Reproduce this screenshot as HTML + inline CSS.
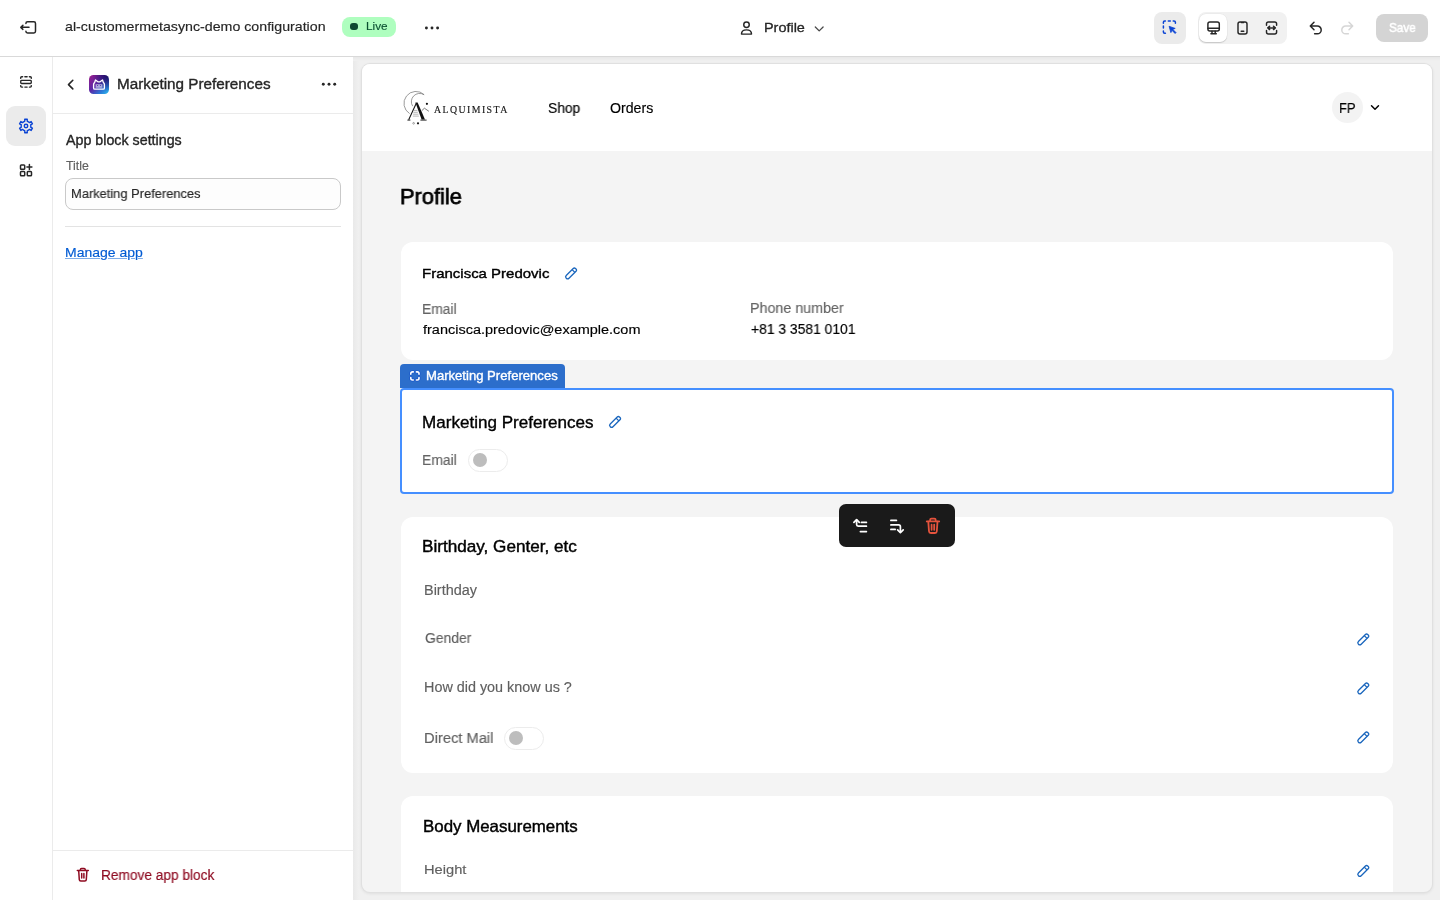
<!DOCTYPE html>
<html><head><meta charset="utf-8">
<style>
*{box-sizing:border-box;margin:0;padding:0}
html,body{width:1440px;height:900px;overflow:hidden;background:#fff;font-family:"Liberation Sans",sans-serif}
.a{position:absolute}
.t{position:absolute;white-space:pre;line-height:normal;will-change:transform}
svg{position:absolute;overflow:visible}
</style></head><body>
<!-- top bar -->
<div class="a" style="left:0;top:0;width:1440px;height:56px;background:#fff"></div>
<div class="a" style="left:0;top:56px;width:1440px;height:1px;background:#d9d9d9"></div>
<!-- left rail -->
<div class="a" style="left:52px;top:57px;width:1px;height:843px;background:#ebebeb"></div>
<div class="a" style="left:6px;top:106px;width:40px;height:40px;border-radius:9px;background:#ebebeb"></div>
<!-- panel -->
<div class="a" style="left:53px;top:113px;width:300px;height:1px;background:#ebebeb"></div>
<div class="a" style="left:89px;top:74.75px;width:20px;height:19.5px;border-radius:4.5px;background:radial-gradient(circle at 100% 0%,rgba(10,5,80,0.85) 0%,rgba(10,5,80,0) 60%),linear-gradient(135deg,#9a1a8a 0%,#5a2aa8 45%,#2a7ad8 75%,#2ec0ee 100%)"></div>
<div class="a" style="left:65px;top:178px;width:276px;height:32px;border-radius:8px;border:1px solid #c9c9c9;background:#fdfdfd"></div>
<div class="a" style="left:65px;top:226px;width:276px;height:1px;background:#e3e3e3"></div>
<div class="a" style="left:53px;top:850px;width:300px;height:1px;background:#ebebeb"></div>
<!-- preview bg -->
<div class="a" style="left:353px;top:57px;width:1087px;height:843px;background:#f0f0f0"></div>
<div class="a" style="left:353px;top:57px;width:6px;height:843px;background:linear-gradient(to right,#e9e9e9,#f0f0f0)"></div>
<div class="a" style="left:353px;top:57px;width:1087px;height:4px;background:linear-gradient(#e8e8e8,#f0f0f0)"></div>
<!-- frame -->
<div class="a" style="left:361px;top:63px;width:1072px;height:830px;border-radius:9px;background:#e0e0e0;box-shadow:0 1px 3px rgba(0,0,0,0.07)"></div>
<div class="a" style="left:362px;top:64px;width:1070px;height:828px;border-radius:8px;background:#f4f4f4;overflow:hidden">
  <div class="a" style="left:0;top:0;width:1070px;height:87px;background:#fff"></div>
</div>
<!-- cards -->
<div class="a" style="left:401px;top:242px;width:992px;height:118px;border-radius:12px;background:#fff"></div>
<div class="a" style="left:400px;top:388px;width:994px;height:106px;border-radius:4px;border:2px solid #458fff;background:#fff"></div>
<div class="a" style="left:400px;top:364px;width:165px;height:24px;border-radius:4px 4px 0 0;background:#2c6ecb"></div>
<div class="a" style="left:401px;top:516.5px;width:992px;height:256px;border-radius:12px;background:#fff"></div>
<div class="a" style="left:401px;top:796px;width:992px;height:96px;border-radius:12px 12px 0 0;background:#fff"></div>
<!-- toggles -->
<div class="a" style="left:467.5px;top:448.5px;width:40px;height:23px;border-radius:12px;border:1px solid #ececec;background:#fff"></div>
<div class="a" style="left:472.6px;top:453px;width:14px;height:14px;border-radius:7px;background:#bdbdbd"></div>
<div class="a" style="left:503.8px;top:726.5px;width:40px;height:23px;border-radius:12px;border:1px solid #ececec;background:#fff"></div>
<div class="a" style="left:508.7px;top:731px;width:14px;height:14px;border-radius:7px;background:#bdbdbd"></div>
<!-- FP avatar -->
<div class="a" style="left:1331.75px;top:91.6px;width:31.2px;height:31.2px;border-radius:16px;background:#f3f3f3"></div>
<!-- Live badge -->
<div class="a" style="left:342px;top:16.5px;width:54px;height:20px;border-radius:8px;background:#affebf"></div>
<div class="a" style="left:350px;top:22.6px;width:7.8px;height:7.6px;border-radius:3px;background:#0c4a30"></div>
<!-- toolbar right -->
<div class="a" style="left:1154px;top:12px;width:32px;height:32px;border-radius:8px;background:#ebebeb"></div>
<div class="a" style="left:1198px;top:12px;width:89px;height:32px;border-radius:8px;background:#f1f1f1"></div>
<div class="a" style="left:1199px;top:14px;width:28px;height:28px;border-radius:7px;background:#fff;box-shadow:0 1px 1px rgba(0,0,0,0.15),0 0 0 0.5px rgba(0,0,0,0.05)"></div>
<div class="a" style="left:1375.5px;top:14px;width:52.5px;height:28px;border-radius:8px;background:#d4d4d4"></div>
<!-- floating toolbar -->
<div class="a" style="left:839px;top:504.2px;width:115.5px;height:43px;border-radius:7px;background:#1a1a1a"></div>

<div class="t" style="left:65.27px;top:20.06px;font-size:12.64px;font-weight:400;color:#262626;font-family:'Liberation Sans';-webkit-text-stroke:0.15px #262626;transform:scaleX(1.1253);transform-origin:0 0;">al-customermetasync-demo configuration</div>
<div class="t" style="left:365.57px;top:19.44px;font-size:11.78px;font-weight:400;color:#0c5132;font-family:'Liberation Sans';-webkit-text-stroke:0.15px #0c5132;">Live</div>
<div class="t" style="left:764.46px;top:20.30px;font-size:13.26px;font-weight:400;color:#262626;font-family:'Liberation Sans';-webkit-text-stroke:0.3px #262626;transform:scaleX(1.0888);transform-origin:0 0;">Profile</div>
<div class="t" style="left:1388.85px;top:20.85px;font-size:12.54px;font-weight:400;color:#ffffff;font-family:'Liberation Sans';-webkit-text-stroke:0.5px #ffffff;transform:scaleX(0.9382);transform-origin:0 0;">Save</div>
<div class="t" style="left:117.44px;top:76.19px;font-size:14.82px;font-weight:400;color:#262626;font-family:'Liberation Sans';-webkit-text-stroke:0.35px #262626;transform:scaleX(1.0305);transform-origin:0 0;">Marketing Preferences</div>
<div class="t" style="left:66.17px;top:132.18px;font-size:13.95px;font-weight:400;color:#262626;font-family:'Liberation Sans';-webkit-text-stroke:0.35px #262626;transform:scaleX(1.0230);transform-origin:0 0;">App block settings</div>
<div class="t" style="left:66.27px;top:159.01px;font-size:11.92px;font-weight:400;color:#616161;font-family:'Liberation Sans';-webkit-text-stroke:0.15px #616161;transform:scaleX(1.0366);transform-origin:0 0;">Title</div>
<div class="t" style="left:70.94px;top:186.46px;font-size:13.08px;font-weight:400;color:#262626;font-family:'Liberation Sans';-webkit-text-stroke:0.15px #262626;transform:scaleX(0.9845);transform-origin:0 0;">Marketing Preferences</div>
<div class="t" style="left:64.83px;top:245.20px;font-size:13.37px;font-weight:400;color:#005bd3;font-family:'Liberation Sans';text-decoration:underline;text-underline-offset:1px;text-decoration-thickness:1px;text-decoration-color:rgba(0,91,211,0.5);-webkit-text-stroke:0.15px #005bd3;transform:scaleX(1.0481);transform-origin:0 0;">Manage app</div>
<div class="t" style="left:101.19px;top:866.98px;font-size:13.95px;font-weight:400;color:#8e0b21;font-family:'Liberation Sans';-webkit-text-stroke:0.15px #8e0b21;transform:scaleX(0.9815);transform-origin:0 0;">Remove app block</div>
<div class="t" style="left:548.38px;top:99.64px;font-size:14.09px;font-weight:400;color:#000000;font-family:'Liberation Sans';-webkit-text-stroke:0.15px #000000;transform:scaleX(0.9788);transform-origin:0 0;">Shop</div>
<div class="t" style="left:609.68px;top:99.64px;font-size:14.09px;font-weight:400;color:#000000;font-family:'Liberation Sans';-webkit-text-stroke:0.15px #000000;transform:scaleX(1.0061);transform-origin:0 0;">Orders</div>
<div class="t" style="left:1339.35px;top:99.58px;font-size:13.95px;font-weight:400;color:#000000;font-family:'Liberation Sans';-webkit-text-stroke:0.15px #000000;transform:scaleX(0.9295);transform-origin:0 0;">FP</div>
<div class="t" style="left:400.49px;top:184.33px;font-size:22.28px;font-weight:400;color:#000000;font-family:'Liberation Sans';-webkit-text-stroke:0.75px #000000;transform:scaleX(0.9801);transform-origin:0 0;">Profile</div>
<div class="t" style="left:422.09px;top:266.10px;font-size:13.48px;font-weight:400;color:#000000;font-family:'Liberation Sans';-webkit-text-stroke:0.4px #000000;transform:scaleX(1.1126);transform-origin:0 0;">Francisca Predovic</div>
<div class="t" style="left:422.10px;top:300.61px;font-size:14.24px;font-weight:400;color:#646464;font-family:'Liberation Sans';-webkit-text-stroke:0.15px #646464;transform:scaleX(0.9725);transform-origin:0 0;">Email</div>
<div class="t" style="left:423.07px;top:322.49px;font-size:13.05px;font-weight:400;color:#000000;font-family:'Liberation Sans';-webkit-text-stroke:0.15px #000000;transform:scaleX(1.1096);transform-origin:0 0;">francisca.predovic@example.com</div>
<div class="t" style="left:749.60px;top:300.22px;font-size:14.67px;font-weight:400;color:#646464;font-family:'Liberation Sans';-webkit-text-stroke:0.15px #646464;transform:scaleX(0.9746);transform-origin:0 0;">Phone number</div>
<div class="t" style="left:750.68px;top:321.47px;font-size:14.18px;font-weight:400;color:#000000;font-family:'Liberation Sans';-webkit-text-stroke:0.15px #000000;transform:scaleX(0.9780);transform-origin:0 0;">+81 3 3581 0101</div>
<div class="t" style="left:426.34px;top:369.16px;font-size:12.64px;font-weight:400;color:#ffffff;font-family:'Liberation Sans';-webkit-text-stroke:0.35px #ffffff;transform:scaleX(1.0370);transform-origin:0 0;">Marketing Preferences</div>
<div class="t" style="left:422.45px;top:413.18px;font-size:16.70px;font-weight:400;color:#000000;font-family:'Liberation Sans';-webkit-text-stroke:0.35px #000000;transform:scaleX(1.0223);transform-origin:0 0;">Marketing Preferences</div>
<div class="t" style="left:422.44px;top:451.59px;font-size:14.82px;font-weight:400;color:#646464;font-family:'Liberation Sans';-webkit-text-stroke:0.15px #646464;transform:scaleX(0.9367);transform-origin:0 0;">Email</div>
<div class="t" style="left:422.30px;top:537.83px;font-size:15.65px;font-weight:400;color:#000000;font-family:'Liberation Sans';-webkit-text-stroke:0.4px #000000;transform:scaleX(1.0954);transform-origin:0 0;">Birthday, Genter, etc</div>
<div class="t" style="left:424.07px;top:581.98px;font-size:14.38px;font-weight:400;color:#606060;font-family:'Liberation Sans';-webkit-text-stroke:0.15px #606060;transform:scaleX(1.0058);transform-origin:0 0;">Birthday</div>
<div class="t" style="left:425.07px;top:630.48px;font-size:14.38px;font-weight:400;color:#606060;font-family:'Liberation Sans';-webkit-text-stroke:0.15px #606060;transform:scaleX(0.9645);transform-origin:0 0;">Gender</div>
<div class="t" style="left:424.08px;top:679.48px;font-size:14.38px;font-weight:400;color:#606060;font-family:'Liberation Sans';-webkit-text-stroke:0.15px #606060;">How did you know us ?</div>
<div class="t" style="left:423.98px;top:729.69px;font-size:14.82px;font-weight:400;color:#606060;font-family:'Liberation Sans';-webkit-text-stroke:0.15px #606060;transform:scaleX(0.9921);transform-origin:0 0;">Direct Mail</div>
<div class="t" style="left:422.54px;top:818.04px;font-size:15.87px;font-weight:400;color:#000000;font-family:'Liberation Sans';-webkit-text-stroke:0.4px #000000;transform:scaleX(1.0636);transform-origin:0 0;">Body Measurements</div>
<div class="t" style="left:423.90px;top:862.34px;font-size:13.66px;font-weight:400;color:#606060;font-family:'Liberation Sans';-webkit-text-stroke:0.15px #606060;transform:scaleX(1.0753);transform-origin:0 0;">Height</div>
<div class="t" style="left:434.1px;top:104.3px;font-size:9.8px;letter-spacing:1.45px;color:#1a1a1a;font-family:'Liberation Serif';-webkit-text-stroke:0.15px #1a1a1a">ALQUIMISTA</div>

<!-- ICONS -->
<svg class="a" style="left:0;top:0" width="1440" height="900" viewBox="0 0 1440 900"><path d="M25.9,23.5V23.4Q25.9,21.7 27.6,21.7H33.9Q35.5,21.7 35.5,23.4V31.3Q35.5,33 33.9,33H27.6Q25.9,33 25.9,31.3V31.2" fill="none" stroke="#262626" stroke-width="1.5" stroke-linecap="round"/><path d="M29,27.35H20.9M22.9,25.35L20.8,27.35L22.9,29.35" fill="none" stroke="#262626" stroke-width="1.5" stroke-linecap="round" stroke-linejoin="round"/><g fill="none" stroke="#262626" stroke-width="1.45" stroke-linecap="round"><path d="M20.7,78.3V77.7Q20.7,76.7 21.7,76.7H22.6M24.9,76.7H27.1M29.4,76.7H30.3Q31.3,76.7 31.3,77.7V78.3"/><path d="M20.7,85.6V86.1Q20.7,87.1 21.7,87.1H22.6M24.9,87.1H27.1M29.4,87.1H30.3Q31.3,87.1 31.3,86.1V85.6"/><rect x="20.75" y="80.4" width="10.5" height="3.1" rx="0.8" stroke-width="1.35"/></g><path d="M24.81,121.14L24.73,119.32L27.27,119.32L27.19,121.14L29.61,122.54L31.15,121.56L32.42,123.76L30.80,124.61L30.80,127.39L32.42,128.24L31.15,130.44L29.61,129.46L27.19,130.86L27.27,132.68L24.73,132.68L24.81,130.86L22.39,129.46L20.85,130.44L19.58,128.24L21.20,127.39L21.20,124.61L19.58,123.76L20.85,121.56L22.39,122.54Z" fill="none" stroke="#0b44d4" stroke-width="1.4" stroke-linejoin="round"/><circle cx="26" cy="126" r="1.75" fill="none" stroke="#0b44d4" stroke-width="1.4"/><g fill="none" stroke="#262626" stroke-width="1.5" stroke-linecap="round"><rect x="20.5" y="165" width="4.2" height="4.2" rx="0.8"/><rect x="20.5" y="171.6" width="4.2" height="4.2" rx="0.8"/><rect x="27.3" y="171.6" width="4.2" height="4.2" rx="0.8"/><path d="M29.4,164.6V169.6M26.9,167.1H31.9"/></g><path d="M72.8,80.3L68.5,84.6L72.8,88.9" fill="none" stroke="#262626" stroke-width="1.6" stroke-linecap="round" stroke-linejoin="round"/><g fill="none" stroke="#fff" stroke-width="1.35" stroke-linejoin="round"><path d="M93.6,87.9V84.6Q93.6,83.2 94.6,82.6L95.5,80L97.9,81.8H100.1L102.5,80L103.4,82.6Q104.4,83.2 104.4,84.6V87.9Q104.4,89.1 103.2,89.1H94.8Q93.6,89.1 93.6,87.9Z"/></g><rect x="95.6" y="84.2" width="6.8" height="3.6" fill="#ffffff" fill-opacity="0.55"/><g fill="#3a2aa0"><circle cx="97.6" cy="85.5" r="0.55"/><circle cx="100.4" cy="85.5" r="0.55"/></g><circle cx="323.3" cy="84.2" r="1.45" fill="#262626"/><circle cx="329" cy="84.2" r="1.45" fill="#262626"/><circle cx="334.7" cy="84.2" r="1.45" fill="#262626"/><circle cx="426.4" cy="28" r="1.45" fill="#262626"/><circle cx="432" cy="28" r="1.45" fill="#262626"/><circle cx="437.6" cy="28" r="1.45" fill="#262626"/><g fill="none" stroke="#262626" stroke-width="1.45"><circle cx="746.5" cy="24.7" r="2.75"/><path d="M741.5,34.1C741.5,31.4 743.6,29.9 746.5,29.9C749.4,29.9 751.5,31.4 751.5,34.1Z" stroke-linejoin="round"/></g><path d="M815.3,27L819.2,30.9L823.1,27" fill="none" stroke="#4a4a4a" stroke-width="1.3" stroke-linecap="round" stroke-linejoin="round"/><g fill="none" stroke="#0b44d4" stroke-width="1.5" stroke-linecap="round"><path d="M1163.4,23.3V22.3Q1163.4,21 1164.7,21H1165.4"/><path d="M1168.3,21H1170.3"/><path d="M1173.2,21H1174Q1175.4,21 1175.4,22.3V23.3"/><path d="M1163.4,26.1V28.1"/><path d="M1163.4,31V32Q1163.4,33.2 1164.7,33.2H1165.4"/></g><path d="M1169.1,26.3L1175.2,28.4L1172.8,29.4L1176,32.6L1175.1,33.5L1171.9,30.3L1170.9,32.6Z" fill="#0b44d4" stroke="#0b44d4" stroke-width="0.8" stroke-linejoin="round"/><g fill="none" stroke="#262626" stroke-width="1.45" stroke-linecap="round" stroke-linejoin="round"><rect x="1207.9" y="22" width="11.4" height="9" rx="2"/><path d="M1208,28.3H1219.2M1212,31.2V33.6M1215.2,31.2V33.6M1210.9,33.8H1216.3"/></g><g fill="none" stroke="#262626" stroke-width="1.45" stroke-linecap="round"><rect x="1238" y="21.9" width="9" height="12.1" rx="2"/><path d="M1241.2,31.2H1243.8M1241.3,22.6H1243.7"/></g><g fill="none" stroke="#262626" stroke-width="1.45" stroke-linecap="round" stroke-linejoin="round"><path d="M1266.5,25.2V23.8Q1266.5,21.9 1268.4,21.9H1274.7Q1276.6,21.9 1276.6,23.8V25.2"/><path d="M1266.5,30.5V32Q1266.5,33.9 1268.4,33.9H1274.7Q1276.6,33.9 1276.6,32V30.5"/><path d="M1267.8,27.9H1275.3M1269.6,26.2L1267.8,27.9L1269.6,29.6M1273.5,26.2L1275.3,27.9L1273.5,29.6"/></g><path d="M1314,22.3L1310.3,26L1314,29.7M1310.6,26H1317.3A3.9,3.9 0 0 1 1317.3,33.8H1314.6" fill="none" stroke="#262626" stroke-width="1.5" stroke-linecap="round" stroke-linejoin="round"/><path d="M1314,22.3L1310.3,26L1314,29.7M1310.6,26H1317.3A3.9,3.9 0 0 1 1317.3,33.8H1314.6" transform="translate(2663,0) scale(-1,1)" fill="none" stroke="#d6d6d6" stroke-width="1.5" stroke-linecap="round" stroke-linejoin="round"/><g fill="none" stroke="#8e0b21" stroke-width="1.5" stroke-linecap="round" stroke-linejoin="round"><path d="M80.4,870V869.6Q80.4,868.5 81.5,868.5H84.1Q85.2,868.5 85.2,869.6V870"/><path d="M77.3,870.6H88.3"/><path d="M78.7,870.8L79.3,879.6Q79.4,881 80.8,881H84.8Q86.2,881 86.3,879.6L86.9,870.8"/><path d="M81.7,873.6V877.9M83.9,873.6V877.9"/></g><g fill="none" stroke="#fff" stroke-width="1.7" stroke-linecap="round" stroke-linejoin="round"><path d="M853.9,522.4L856.6,519.6L859.3,522.4"/><path d="M856.6,520V524.6Q856.6,526.2 858.2,526.2H866.4"/><path d="M861.4,522.4H866.4M860.4,531.6H866.4"/><path d="M890.9,520.4H896.4"/><path d="M890.9,524.9H898.6Q900.4,524.9 900.4,526.7V531.8"/><path d="M897.6,529.8L900.4,532.6L903.2,529.8"/><path d="M890.9,529.4H895.2"/></g><g fill="none" stroke="#e5533d" stroke-width="1.8" stroke-linecap="round" stroke-linejoin="round"><path d="M930.1,520.6V520.1Q930.1,518.7 931.5,518.7H934.3Q935.7,518.7 935.7,520.1V520.6"/><path d="M926.8,521.4H939.2"/><path d="M928.3,521.6L929,531.3Q929.1,533 930.8,533H935Q936.7,533 936.8,531.3L937.5,521.6"/><path d="M931.6,524.6V529.8M934.2,524.6V529.8"/></g><g transform="translate(571,273.5) rotate(-45)" fill="none" stroke="#1a66bd" stroke-width="1.3" stroke-linejoin="round"><path d="M-4.8,-1.95H5.1Q6.7,-1.95 6.7,-0.4V0.4Q6.7,1.95 5.1,1.95H-4.8Q-6.7,1.95 -6.7,0Q-6.7,-1.95 -4.8,-1.95Z"/><path d="M3.5,-1.95V1.95"/></g><g transform="translate(615,422) rotate(-45)" fill="none" stroke="#1a66bd" stroke-width="1.3" stroke-linejoin="round"><path d="M-4.8,-1.95H5.1Q6.7,-1.95 6.7,-0.4V0.4Q6.7,1.95 5.1,1.95H-4.8Q-6.7,1.95 -6.7,0Q-6.7,-1.95 -4.8,-1.95Z"/><path d="M3.5,-1.95V1.95"/></g><g transform="translate(1363.2,639.5) rotate(-45)" fill="none" stroke="#1a66bd" stroke-width="1.3" stroke-linejoin="round"><path d="M-4.8,-1.95H5.1Q6.7,-1.95 6.7,-0.4V0.4Q6.7,1.95 5.1,1.95H-4.8Q-6.7,1.95 -6.7,0Q-6.7,-1.95 -4.8,-1.95Z"/><path d="M3.5,-1.95V1.95"/></g><g transform="translate(1363.2,688.5) rotate(-45)" fill="none" stroke="#1a66bd" stroke-width="1.3" stroke-linejoin="round"><path d="M-4.8,-1.95H5.1Q6.7,-1.95 6.7,-0.4V0.4Q6.7,1.95 5.1,1.95H-4.8Q-6.7,1.95 -6.7,0Q-6.7,-1.95 -4.8,-1.95Z"/><path d="M3.5,-1.95V1.95"/></g><g transform="translate(1363.2,737.5) rotate(-45)" fill="none" stroke="#1a66bd" stroke-width="1.3" stroke-linejoin="round"><path d="M-4.8,-1.95H5.1Q6.7,-1.95 6.7,-0.4V0.4Q6.7,1.95 5.1,1.95H-4.8Q-6.7,1.95 -6.7,0Q-6.7,-1.95 -4.8,-1.95Z"/><path d="M3.5,-1.95V1.95"/></g><g transform="translate(1363.2,871) rotate(-45)" fill="none" stroke="#1a66bd" stroke-width="1.3" stroke-linejoin="round"><path d="M-4.8,-1.95H5.1Q6.7,-1.95 6.7,-0.4V0.4Q6.7,1.95 5.1,1.95H-4.8Q-6.7,1.95 -6.7,0Q-6.7,-1.95 -4.8,-1.95Z"/><path d="M3.5,-1.95V1.95"/></g><g fill="none" stroke="#0a3fc8" stroke-opacity="0.55" stroke-width="2.9" stroke-linecap="round"><path d="M410.8,374.3V373.6Q410.8,371.9 412.5,371.9H413.3"/><path d="M416.4,371.9H417.3Q419,371.9 419,373.6V374.3"/><path d="M410.8,377.6V378.3Q410.8,380 412.5,380H413.3"/><path d="M416.4,380H417.3Q419,380 419,378.3V377.6"/></g><g fill="none" stroke="#fff" stroke-width="1.6" stroke-linecap="round"><path d="M410.8,374.3V373.6Q410.8,371.9 412.5,371.9H413.3"/><path d="M416.4,371.9H417.3Q419,371.9 419,373.6V374.3"/><path d="M410.8,377.6V378.3Q410.8,380 412.5,380H413.3"/><path d="M416.4,380H417.3Q419,380 419,378.3V377.6"/></g><g fill="none" stroke="#7a7a7a" stroke-width="0.75"><path d="M409.6,113.6A12,12 0 1 1 424.2,94.7"/><path d="M412.7,106.2A8.25,8.25 0 0 1 424,94.7"/></g><path d="M416.3,103.2L408.7,119.8" stroke="#111" stroke-width="1.05" fill="none"/><path d="M415.4,102.6H417.6L425,119.6H421.6Z" fill="#111"/><path d="M407.4,120.1H410.4M420.4,120.1H426.6" stroke="#111" stroke-width="0.9" fill="none"/><g stroke="#9a9a9a" stroke-width="0.7"><path d="M413.8,110.4H417.4M413.4,112.3H417.8M413.1,114.2H418.4M412.8,116.1H418.9"/></g><circle cx="426.9" cy="103.8" r="1.1" fill="#111"/><path d="M421.8,110.7L424.4,108.2L428.9,111.3" fill="none" stroke="#444" stroke-width="0.7"/><circle cx="413.6" cy="123.3" r="0.85" fill="none" stroke="#555" stroke-width="0.5"/><circle cx="418" cy="123.3" r="1.1" fill="#111"/><path d="M1371.5,105.8L1375,109.3L1378.5,105.8" fill="none" stroke="#000" stroke-width="1.45" stroke-linecap="round" stroke-linejoin="round"/></svg>
</body></html>
